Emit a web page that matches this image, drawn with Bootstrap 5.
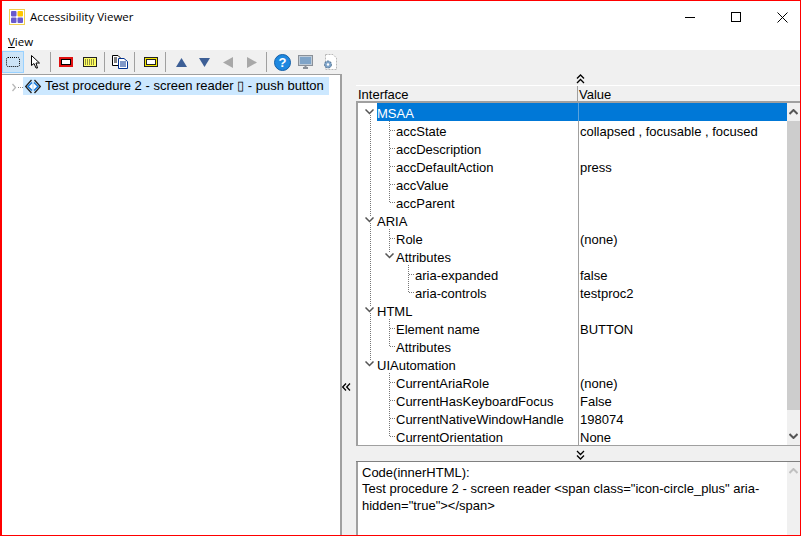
<!DOCTYPE html>
<html lang="en"><head><meta charset="utf-8"><title>Accessibility Viewer</title>
<link href="https://cdn.jsdelivr.net/npm/bootstrap@5.3.0/dist/css/bootstrap.min.css" rel="stylesheet">
<style>
html,body{height:536px;overflow:hidden;margin:0}
body{font:13px/16px "Liberation Sans",Arial,sans-serif;color:#000;background:#fff}
.app-frame{height:536px;width:801px;border:solid #f00;border-width:1px 1px 1px 2px}
.title-bar{height:32px;font-family:"Open Sans",sans-serif;font-size:11.5px;padding-left:7px}
.title-text{margin-left:5px}
.win-group{margin-right:-5px}
.win-btn{width:46px;height:32px}
.menu-strip{height:17px;font-family:"Open Sans",sans-serif;font-size:11.5px;padding-left:6px;line-height:17px}
.tool-strip{height:24px;background:#f0f0f0}
.tb-slot{width:23.5px;height:22px;flex:none}
.tb-on{width:22px;background:#cce4f7;border:1px solid #99d1ff}
.tb-sep{width:1px;height:20px;background:#a0a0a0;margin:0 4px 0 2px;flex:none}
.main-area{height:461px}
.tree-pane{width:340px;border-top:1px solid #a0a0a0;border-right:2px solid #a0a0a0;padding-top:2px}
.left-row{height:18px}
.left-sel{background:#cce8ff;width:306px;padding-left:2px;line-height:18px;white-space:nowrap}
.side-pane{background:#f0f0f0;flex:1;min-width:0}
.handle-strip{width:14px;padding-top:309px;flex:none}
.detail-col{flex:1;min-width:0}
.split-h{height:11px;padding-left:220px}
.split-h2{height:17px;padding-left:220px;border-top:1px solid #a0a0a0;border-bottom:1px solid #808080}
.grid-head{height:18px;border-top:1px solid #fff;border-bottom:2px solid #a0a0a0;line-height:17px;background:#f0f0f0}
.h-name{width:222px;padding-left:2px;border-right:1px solid #a0a0a0}
.h-val{padding-left:1px}
.grid-body{height:342px;background:#fff;border-left:2px solid #a0a0a0}
.grid-rows{flex:1;min-width:0;padding-left:3px}
.t-row{height:18px;line-height:21px}
.t-name{width:217px;flex:none}
.t-label{flex:1;min-width:0;white-space:nowrap}
.t-val{flex:1;border-left:1px solid #a0a0a0;padding-left:1px;white-space:nowrap}
.t-sel .t-label,.t-sel .t-val{background:#0078d7;color:#fff}
.t-sel .t-val{border-left-color:#5ba3dd}
.gc{--x:9px;height:18px;width:16px;flex:none;background-repeat:no-repeat;--dv:repeating-linear-gradient(#777 0 1px,transparent 1px 2px);--dh:repeating-linear-gradient(90deg,#777 0 1px,transparent 1px 2px)}
.gb,.gc3{--x:12px;width:19px}
.gv{background-image:var(--dv);background-size:1px 100%;background-position:var(--x) 0}
.gd{background-image:var(--dv);background-size:1px 6px;background-position:var(--x) 12px}
.gu{background-image:var(--dv);background-size:1px 6px;background-position:var(--x) 0}
.gt,.ge{background-image:var(--dv),var(--dh);background-position:var(--x) 0,calc(var(--x) + 1px) 9px;background-size:1px 100%,6px 1px}
.ge{background-size:1px 10px,6px 1px}
.chev-a{margin:6px 0 0 4px;display:block;background:#fff}
.chev-b{margin:6px 0 0 8px;display:block;background:#fff}
.v-bar{width:13px;flex:none;background:#f0f0f0}
.v-btn{height:18px;flex:none}
.v-thumb{height:289px;background:#cdcdcd;flex:none}
.code-box{height:73px;background:#fff;border-left:2px solid #a0a0a0}
.code-text{flex:1;min-width:0;padding:2.6px 20px 0 4px;line-height:16.5px}
</style></head>
<body>
<div class="app-frame d-flex flex-column">
 <div class="title-bar d-flex align-items-center">
  <svg width="16" height="16" viewBox="0 0 16 16"><rect x=".5" y=".5" width="15" height="15" fill="#fff" stroke="#f0d050"/><rect x="2" y="2" width="5.5" height="5.5" rx="1" fill="#6a5acd"/><rect x="8.5" y="2" width="5.5" height="5.5" rx="1" fill="#ffc800"/><rect x="2" y="8.5" width="5.5" height="5.5" rx="1" fill="#6a5acd"/><rect x="8.5" y="8.5" width="5.5" height="5.5" rx="1" fill="#6a5acd"/></svg>
  <span class="title-text">Accessibility Viewer</span>
  <div class="ms-auto d-flex win-group">
   <div class="win-btn d-flex align-items-center justify-content-center"><svg width="10" height="10"><path d="M0 5.5H10" stroke="#000"/></svg></div>
   <div class="win-btn d-flex align-items-center justify-content-center"><svg width="10" height="10"><rect x=".5" y=".5" width="9" height="9" fill="none" stroke="#000"/></svg></div>
   <div class="win-btn d-flex align-items-center justify-content-center"><svg width="11" height="11"><path d="M.5.5L10.5 10.5M10.5.5L.5 10.5" stroke="#000"/></svg></div>
  </div>
 </div>
 <div class="menu-strip"><u>V</u>iew</div>
 <div class="tool-strip d-flex align-items-center">
  <div class="tb-slot tb-on d-flex align-items-center justify-content-center"><svg width="14" height="10"><rect x=".5" y=".5" width="13" height="9" rx="1.5" fill="none" stroke="#000" stroke-dasharray="1 1"/></svg></div>
  <div class="tb-slot d-flex align-items-center justify-content-center"><svg width="9" height="14" viewBox="0 0 9 14"><path d="M.5.5V10.5L3 8.500L5 13H6.500L5 8H8.500Z" fill="#fff" stroke="#000" stroke-width="1"/></svg></div>
  <div class="tb-sep"></div>
  <div class="tb-slot d-flex align-items-center justify-content-center"><svg width="14" height="10"><rect x="1" y="1" width="12" height="8" fill="#fff" stroke="#e01010" stroke-width="2"/><rect x="2.500" y="2.500" width="9" height="5" fill="none" stroke="#000"/></svg></div>
  <div class="tb-slot d-flex align-items-center justify-content-center"><svg width="14" height="10"><rect x=".5" y=".5" width="13" height="9" fill="#ffff60" stroke="#222"/><path d="M2 3H12M2 5H12M2 7H12" stroke="#222" stroke-dasharray="1 1"/></svg></div>
  <div class="tb-sep"></div>
  <div class="tb-slot d-flex align-items-center justify-content-center"><svg width="16" height="14"><path d="M.5.5H6L8 2.500V10.500H.5Z" fill="#fff" stroke="#000"/><path d="M6.500 3.500H12L15.500 6.500V13.500H6.500Z" fill="#fff" stroke="#003090"/><path d="M8 7H14M8 9H14M8 11H14" stroke="#003090"/><path d="M2 3H5M2 5H5M2 7H5" stroke="#000"/></svg></div>
  <div class="tb-sep"></div>
  <div class="tb-slot d-flex align-items-center justify-content-center"><svg width="14" height="10"><rect x="1" y="1" width="12" height="8" fill="#fff" stroke="#f4e800" stroke-width="2"/><rect x=".5" y=".5" width="13" height="9" fill="none" stroke="#222"/><rect x="2.500" y="2.500" width="9" height="5" fill="none" stroke="#222"/></svg></div>
  <div class="tb-sep"></div>
  <div class="tb-slot d-flex align-items-center justify-content-center"><svg width="11" height="9"><path d="M5.500 0L11 9H0Z" fill="#3d5f96"/></svg></div>
  <div class="tb-slot d-flex align-items-center justify-content-center"><svg width="11" height="9"><path d="M0 0H11L5.500 9Z" fill="#3d5f96"/></svg></div>
  <div class="tb-slot d-flex align-items-center justify-content-center"><svg width="10" height="11"><path d="M0 5.500L10 0V11Z" fill="#a8a8a8"/></svg></div>
  <div class="tb-slot d-flex align-items-center justify-content-center"><svg width="10" height="11"><path d="M10 5.500L0 0V11Z" fill="#a8a8a8"/></svg></div>
  <div class="tb-sep"></div>
  <div class="tb-slot d-flex align-items-center justify-content-center"><svg width="17" height="17"><circle cx="8.500" cy="8.500" r="8" fill="#1e88e0" stroke="#1560a8"/><text x="8.500" y="13" text-anchor="middle" font-family="Liberation Sans" font-weight="700" font-size="13" fill="#fff">?</text></svg></div>
  <div class="tb-slot d-flex align-items-center justify-content-center"><svg width="15" height="15"><rect x=".5" y=".5" width="14" height="10" fill="#c0ccd8" stroke="#8a9098"/><rect x="2" y="2" width="11" height="7" fill="#7fa4c8"/><path d="M5 13H10M7.500 11V13" stroke="#8a9098" stroke-width="2"/></svg></div>
  <div class="tb-slot d-flex align-items-center justify-content-center"><svg width="15" height="16"><path d="M3.500.5H11L14.500 4V15.500H3.500Z" fill="#fff" stroke="#b8b8b8" stroke-dasharray="2 1"/><circle cx="6" cy="10.500" r="3.500" fill="#7ea3c8" stroke="#50708f" stroke-dasharray="2 1"/><circle cx="6" cy="10.500" r="1.200" fill="#fff"/></svg></div>
 </div>
 <div class="main-area d-flex">
  <div class="tree-pane">
   <div class="left-row d-flex">
    <svg class="ms-2 mt-1" width="13" height="12"><path d="M2.500 3L5.500 6.500L2.500 10" fill="none" stroke="#b8b8b8" stroke-width="1.300"/><path d="M8 6.500H13" stroke="#888" stroke-dasharray="1 1"/></svg>
    <div class="left-sel d-flex">
     <svg class="me-1 flex-none align-self-center" width="16" height="15" viewBox="0 0 16 15"><path d="M6.500 1L.7 7.500L6.500 14M9.500 1L15.300 7.500L9.500 14" fill="none" stroke="#222" stroke-width="1.300"/><path d="M7 3.500L3 7.500L7 11.500M9 3.500L13 7.500L9 11.500" fill="#fff" stroke="#1878d8" stroke-width="1.500"/></svg>
     <span>Test procedure 2 - screen reader ▯ - push button</span>
    </div>
   </div>
  </div>
  <div class="side-pane d-flex">
   <div class="handle-strip"><svg class="d-block" width="9" height="8"><path d="M4 .5L.7 4L4 7.500M8 .5L4.700 4L8 7.500" fill="none" stroke="#000" stroke-width="1.300"/></svg></div>
   <div class="detail-col d-flex flex-column">
    <div class="split-h"><svg class="d-block" width="9" height="10"><path d="M1 4.500L4.500 1L8 4.500M1 9L4.500 5.500L8 9" fill="none" stroke="#000" stroke-width="1.300"/></svg></div>
    <div class="grid-head d-flex"><div class="h-name">Interface</div><div class="h-val">Value</div></div>
    <div class="grid-body d-flex">
     <div class="grid-rows">
      <div class="t-row t-sel d-flex"><div class="t-name d-flex"><div class="gc gd"><svg class="chev-a" width="9" height="6"><path d="M.5.500L4.500 4.500L8.500.500" fill="none" stroke="#555" stroke-width="1.500"/></svg></div><div class="t-label">MSAA</div></div><div class="t-val"></div></div>
      <div class="t-row d-flex"><div class="t-name d-flex"><div class="gc gv"></div><div class="gc gb gt"></div><div class="t-label">accState</div></div><div class="t-val">collapsed , focusable , focused</div></div>
      <div class="t-row d-flex"><div class="t-name d-flex"><div class="gc gv"></div><div class="gc gb gt"></div><div class="t-label">accDescription</div></div><div class="t-val"></div></div>
      <div class="t-row d-flex"><div class="t-name d-flex"><div class="gc gv"></div><div class="gc gb gt"></div><div class="t-label">accDefaultAction</div></div><div class="t-val">press</div></div>
      <div class="t-row d-flex"><div class="t-name d-flex"><div class="gc gv"></div><div class="gc gb gt"></div><div class="t-label">accValue</div></div><div class="t-val"></div></div>
      <div class="t-row d-flex"><div class="t-name d-flex"><div class="gc gv"></div><div class="gc gb ge"></div><div class="t-label">accParent</div></div><div class="t-val"></div></div>
      <div class="t-row d-flex"><div class="t-name d-flex"><div class="gc gv"><svg class="chev-a" width="9" height="6"><path d="M.5.500L4.500 4.500L8.500.500" fill="none" stroke="#555" stroke-width="1.500"/></svg></div><div class="t-label">ARIA</div></div><div class="t-val"></div></div>
      <div class="t-row d-flex"><div class="t-name d-flex"><div class="gc gv"></div><div class="gc gb gt"></div><div class="t-label">Role</div></div><div class="t-val">(none)</div></div>
      <div class="t-row d-flex"><div class="t-name d-flex"><div class="gc gv"></div><div class="gc gb gu"><svg class="chev-b" width="9" height="6"><path d="M.5.500L4.500 4.500L8.500.500" fill="none" stroke="#555" stroke-width="1.500"/></svg></div><div class="t-label">Attributes</div></div><div class="t-val"></div></div>
      <div class="t-row d-flex"><div class="t-name d-flex"><div class="gc gv"></div><div class="gc gb"></div><div class="gc gc3 gt"></div><div class="t-label">aria-expanded</div></div><div class="t-val">false</div></div>
      <div class="t-row d-flex"><div class="t-name d-flex"><div class="gc gv"></div><div class="gc gb"></div><div class="gc gc3 ge"></div><div class="t-label">aria-controls</div></div><div class="t-val">testproc2</div></div>
      <div class="t-row d-flex"><div class="t-name d-flex"><div class="gc gv"><svg class="chev-a" width="9" height="6"><path d="M.5.500L4.500 4.500L8.500.500" fill="none" stroke="#555" stroke-width="1.500"/></svg></div><div class="t-label">HTML</div></div><div class="t-val"></div></div>
      <div class="t-row d-flex"><div class="t-name d-flex"><div class="gc gv"></div><div class="gc gb gt"></div><div class="t-label">Element name</div></div><div class="t-val">BUTTON</div></div>
      <div class="t-row d-flex"><div class="t-name d-flex"><div class="gc gv"></div><div class="gc gb ge"></div><div class="t-label">Attributes</div></div><div class="t-val"></div></div>
      <div class="t-row d-flex"><div class="t-name d-flex"><div class="gc gu"><svg class="chev-a" width="9" height="6"><path d="M.5.500L4.500 4.500L8.500.500" fill="none" stroke="#555" stroke-width="1.500"/></svg></div><div class="t-label">UIAutomation</div></div><div class="t-val"></div></div>
      <div class="t-row d-flex"><div class="t-name d-flex"><div class="gc"></div><div class="gc gb gt"></div><div class="t-label">CurrentAriaRole</div></div><div class="t-val">(none)</div></div>
      <div class="t-row d-flex"><div class="t-name d-flex"><div class="gc"></div><div class="gc gb gt"></div><div class="t-label">CurrentHasKeyboardFocus</div></div><div class="t-val">False</div></div>
      <div class="t-row d-flex"><div class="t-name d-flex"><div class="gc"></div><div class="gc gb gt"></div><div class="t-label">CurrentNativeWindowHandle</div></div><div class="t-val">198074</div></div>
      <div class="t-row d-flex"><div class="t-name d-flex"><div class="gc"></div><div class="gc gb ge"></div><div class="t-label">CurrentOrientation</div></div><div class="t-val">None</div></div>
     </div>
     <div class="v-bar d-flex flex-column">
      <div class="v-btn d-flex align-items-center justify-content-center"><svg width="9" height="6"><path d="M.5 5L4.500 1L8.500 5" fill="none" stroke="#555" stroke-width="2"/></svg></div>
      <div class="v-thumb"></div>
      <div class="flex-grow-1"></div>
      <div class="v-btn d-flex align-items-center justify-content-center"><svg width="9" height="6"><path d="M.5 1L4.500 5L8.500 1" fill="none" stroke="#555" stroke-width="2"/></svg></div>
     </div>
    </div>
    <div class="split-h2"><svg class="d-block mt-1" width="9" height="10"><path d="M1 1L4.500 4.500L8 1M1 5.500L4.500 9L8 5.500" fill="none" stroke="#000" stroke-width="1.300"/></svg></div>
    <div class="code-box d-flex flex-grow-1">
     <div class="code-text">Code(innerHTML):<br>Test procedure 2 - screen reader &lt;span class="icon-circle_plus" aria-hidden="true"&gt;&lt;/span&gt;</div>
     <div class="v-bar"><div class="v-btn d-flex align-items-center justify-content-center"><svg width="9" height="6"><path d="M.5 5L4.500 1L8.500 5" fill="none" stroke="#c0c0c0" stroke-width="2"/></svg></div></div>
    </div>
   </div>
  </div>
 </div>
</div>
</body></html>
